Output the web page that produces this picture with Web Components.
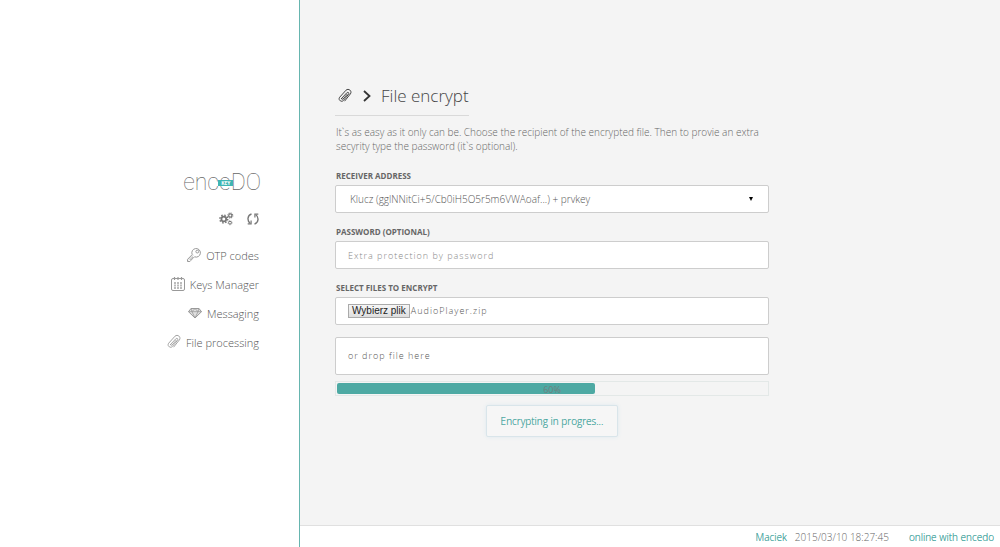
<!DOCTYPE html>
<html lang="en">
<head>
<meta charset="utf-8">
<meta name="viewport" content="width=device-width, initial-scale=1">
<title>Encedo Key – File encrypt</title>
<style>
  html, body { margin: 0; height: 100%; }
  body {
    --teal: #4da9a3; --line: #cdcdcd; --bg: #f4f4f4;
    background: var(--bg); color: #777;
    font: 300 10px/14px "Open Sans", "Noto Sans", sans-serif;
  }
</style>
</head>
<body>
<app-shell>
  <side-bar slot="side"></side-bar>
  <encrypt-form></encrypt-form>
  <status-bar slot="footer"></status-bar>
</app-shell>

<script>
const define = (name, html, setup) => {
  const t = document.createElement('template');
  t.innerHTML = html;
  customElements.define(name, class extends HTMLElement {
    constructor() {
      super();
      this.attachShadow({ mode: 'open' }).append(t.content.cloneNode(true));
    }
    connectedCallback() { if (setup) setup(this); }
  });
};

const clip = '<g fill="none" stroke="currentColor" stroke-width=".9" stroke-linecap="round" stroke-linejoin="round"><path d="M4.600 10.400 9.800 4.800C11 3.600 12.600 5 11.500 6.300L6.400 12.500C4.600 14.600.6 12 2.700 9.200L9 2.200C11.400-.1 15.500 2.900 13.400 5.900L7.800 12.900"/><path d="M10.200 6.200 6.200 10.900C5.400 11.700 4 11.200 4.600 10.400"/></g>';
const shapes = {
  key: '<g fill="none" stroke="currentColor" stroke-width="1" stroke-linejoin="round"><path d="M6.200 7.600A4.300 4.300 0 1 1 8.500 9.800L7.500 10.800H6.200V12.200H4.800V13.500L3.900 14.500H1.500V12.400Z"/><path d="M2.500 13 7.500 8.200" stroke-width=".6"/><circle cx="11.300" cy="4.600" r="1.400"/></g>',
  calendar: '<g fill="none" stroke="currentColor"><rect x="1.500" y="2.500" width="13" height="12" rx="1.500"/><path d="M4.500 1v3M8 1v3M11.500 1v3" stroke-width="1.200"/><path d="M5 6v7M8 6v7M11 6v7" stroke-width="1.300" stroke-dasharray="1.900 .6"/></g>',
  gem: '<path d="M4 3.500h8l2.500 3.200L8 13 1.500 6.700Z" fill="currentColor" fill-opacity=".3" stroke="currentColor" stroke-linejoin="round"/><path d="M1.500 6.700h13M4 3.500l1 3.200 3 6.300 3-6.300 1-3.200M5 6.700l3-3.200 3 3.200" fill="none" stroke="currentColor" stroke-width=".8"/>',
  clip,
  gears: '<g fill="none" stroke="currentColor"><circle cx="5.800" cy="8" r="2.400" stroke-width="1.800"/><circle cx="5.800" cy="8" r="3.900" stroke-width="1.500" stroke-dasharray="1.530 1.530"/><circle cx="12.300" cy="4.500" r="1.600" stroke-width="1.200"/><circle cx="12.300" cy="4.500" r="2.500" stroke-width="1.100" stroke-dasharray=".98 .98"/><circle cx="12" cy="11.700" r="1.400" stroke-width="1"/><circle cx="12" cy="11.700" r="2.100" stroke-width=".7" stroke-dasharray=".82 .82"/></g>',
  refresh: '<g fill="none" stroke="currentColor" stroke-width="1.400"><path d="M6.500 3C2.200 4.300 2 10 5.200 12.300M9.500 13c4.300-1.300 4.500-7 1.300-9.300"/><path d="M2.700 12.800h3.400V9.400M13.300 3.200H9.900v3.400" stroke-width="1.200"/></g>',
  chevron: '<path d="m5 3 5.500 5L5 13" fill="none" stroke="currentColor" stroke-width="1.800"/>'
};
define('ui-icon', '<style>:host{display:block;flex:none;width:16px;height:16px}svg{display:block;width:100%;height:100%}</style><svg viewBox="0 0 16 16" aria-hidden="true"></svg>',
  el => { el.shadowRoot.querySelector('svg').innerHTML = shapes[el.getAttribute('name')]; });

define('app-shell', `
<style>
  :host { display: grid; grid-template: 1fr auto / 3fr 7fr; min-height: 100vh; }
  aside { grid-row: 1 / 3; box-sizing: border-box; background: #fff; border-right: 1px solid #66b5af;
    display: flex; flex-direction: column; justify-content: center; align-items: flex-end; padding: 0 38px 20px 16px; }
  main { min-width: 0; display: flex; flex-direction: column; justify-content: center; padding: 0 35px 3px; }
</style>
<aside><slot name="side"></slot></aside>
<main><slot></slot></main>
<slot name="footer"></slot>`);

define('brand-logo', `
<style>
  :host { display: block; position: relative; color: #666; font: 100 23px/24px Roboto, sans-serif; }
  b { position: absolute; left: 35px; top: 9px; padding: 0 3px; background: #3fb5b3; color: #fff;
    font: 700 5px/6px "Open Sans", sans-serif; }
</style>enceDO<b>KEY</b>`);

define('nav-item', `
<style>
  :host { display: block; }
  a { display: flex; align-items: center; gap: 4px; color: #555; text-decoration: none; font-size: 11px; line-height: 29px; }
</style>
<a href="#"><ui-icon></ui-icon><slot></slot></a>`,
  el => {
    const i = document.createElement('ui-icon');
    i.setAttribute('name', el.getAttribute('icon'));
    el.shadowRoot.querySelector('ui-icon').replaceWith(i);
    i.style.color = '#999';
  });

define('side-bar', `
<style>
  :host { display: block; }
  nav, .tools { display: flex; }
  nav { flex-direction: column; align-items: flex-end; padding-right: 2px; }
  .tools { justify-content: flex-end; gap: 11px; margin: 16px 0 14px; }
  brand-logo { width: max-content; margin-left: auto; }
  button { border: 0; padding: 0; background: none; color: #777; }
</style>
<brand-logo></brand-logo>
<div class="tools">
  <button type="button" aria-label="Settings"><ui-icon name="gears"></ui-icon></button>
  <button type="button" aria-label="Refresh"><ui-icon name="refresh"></ui-icon></button>
</div>
<nav>
  <nav-item icon="key">OTP codes</nav-item>
  <nav-item icon="calendar">Keys Manager</nav-item>
  <nav-item icon="gem">Messaging</nav-item>
  <nav-item icon="clip">File processing</nav-item>
</nav>`);

define('page-title', `
<style>
  :host { display: flex; align-items: center; gap: 6px; width: max-content; box-sizing: border-box;
    padding: 0 0 8px 2px; border-bottom: 1px solid #d9d9d9; color: #333; }
  h1 { margin: 0; font: inherit; font-size: 17px; line-height: 22px; color: #444; }
</style>
<ui-icon name="clip"></ui-icon><ui-icon name="chevron"></ui-icon><h1><slot></slot></h1>`);

define('form-field', `
<style>:host { display: flex; flex-direction: column; gap: 3px; }</style>
<slot name="label"></slot><slot></slot>`);

define('progress-meter', `
<style>
  :host { display: block; position: relative; border: 1px solid #e3e8e7; padding: 1px; font-size: 9px; line-height: 11px; }
  .bar { width: 60%; height: 11px; border-radius: 2px; background: var(--teal); }
  .text { position: absolute; inset: 2px 0 0; text-align: center; color: #6f7f7d; font-weight: 400; }
</style>
<div role="progressbar" aria-label="Encryption" aria-valuenow="60" aria-valuemin="0" aria-valuemax="100"><div class="bar"></div></div>
<div class="text">60%</div>`);

define('encrypt-form', `
<style>
  :host { display: block; max-width: 434px; }
  * { box-sizing: border-box; }
  p { margin: 9px 0 17px; padding-left: 1px; color: #666; }
  form { display: flex; flex-direction: column; }
  form-field { margin-bottom: 13px; }
  form-field.last { margin-bottom: 12px; }
  label { padding-left: 1px; font-weight: 700; font-size: 8px; line-height: 12px; color: #666; }
  .box, select, input.text { width: 100%; height: 28px; margin: 0; border: 1px solid var(--line); border-radius: 2px;
    background: #fff; color: #555; font: inherit; padding: 0 12px; }
  select { appearance: none; padding: 0 14px; }
  .pick { position: relative; display: block; }
  .pick svg { position: absolute; right: 16px; top: 12px; width: 4px; height: 4px; pointer-events: none; }
  input.text, .box { letter-spacing: 1px; font-size: 9px; }
  input::placeholder { color: #888; opacity: 1; }
  .box { display: flex; align-items: center; gap: 1px; position: relative; }
  .box input { position: absolute; inset: 0; opacity: 0; width: 100%; }
  .file { letter-spacing: 0; border: 1px solid #aaa; background: linear-gradient(#f6f6f6, #dedede); color: #222;
    font: 400 10px/12px "Liberation Sans", Arial, sans-serif; padding: 0 3px; }
  .drop { height: 38px; margin-bottom: 6px; }
  button { align-self: center; margin-top: 9px; height: 32px; padding: 0 14px; border: 1px solid #d9e5ea; border-radius: 2px;
    background: #f6f6f6; box-shadow: 0 0 4px #dfeaf0; color: var(--teal); font: inherit; text-shadow: 0 0 0 currentColor; }
</style>
<page-title>File encrypt</page-title>
<p>It\`s as easy as it only can be. Choose the recipient of the encrypted file. Then to provie an extra secyrity type the password (it\`s optional).</p>
<form>
  <form-field>
    <label slot="label" for="receiver">RECEIVER ADDRESS</label>
    <span class="pick">
      <select id="receiver"><option>Klucz (gglNNitCi+5/Cb0iH5O5r5m6VWAoaf...) + prvkey</option></select>
      <svg viewBox="0 0 5 5" aria-hidden="true"><path d="M0 0h5L2.500 5Z" fill="#000"/></svg>
    </span>
  </form-field>
  <form-field>
    <label slot="label" for="password">PASSWORD (OPTIONAL)</label>
    <input class="text" id="password" type="password" placeholder="Extra protection by password">
  </form-field>
  <form-field class="last">
    <label slot="label" for="file">SELECT FILES TO ENCRYPT</label>
    <div class="box"><span class="file">Wybierz plik</span><span>AudioPlayer.zip</span><input id="file" type="file"></div>
  </form-field>
  <div class="box drop">or drop file here</div>
  <progress-meter></progress-meter>
  <button type="button">Encrypting in progres...</button>
</form>`);

define('status-bar', `
<style>
  :host { display: flex; justify-content: flex-end; align-items: center; box-sizing: border-box; height: 22px;
    padding: 0 6px; border-top: 1px solid #e0e0e0; background: #fff; color: #666; }
  a { color: var(--teal); text-decoration: none; text-shadow: 0 0 0 currentColor; }
  time { margin: 0 20px 0 8px; }
</style>
<a href="#">Maciek</a><time datetime="2015-03-10T18:27:45">2015/03/10 18:27:45</time><a href="#">online with encedo</a>`);
</script>
</body>
</html>
